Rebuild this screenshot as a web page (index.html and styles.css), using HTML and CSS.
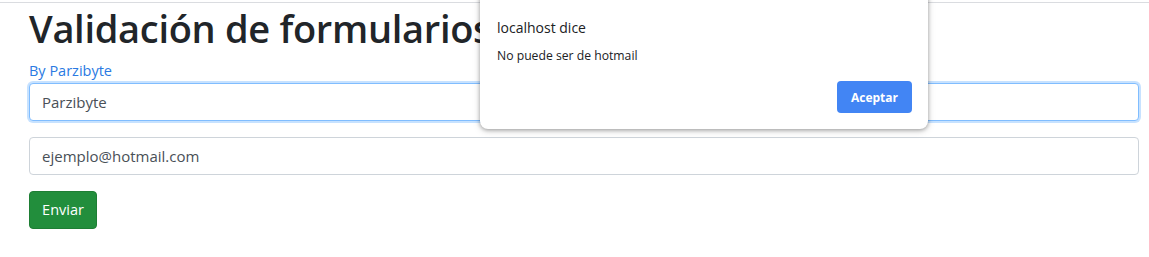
FILE: index.html
```html
<!DOCTYPE html>
<html lang="es">
<head>
    <meta charset="UTF-8">
    <meta name="viewport" content="width=device-width, initial-scale=1.0">
    <title>Validación de formularios</title>
    <link rel="stylesheet" href="styles.css">
</head>
<body>
    <div class="browser-edge"></div>

    <main class="container">
        <h1>Validación de formularios</h1>
        <a class="author" href="#">By Parzibyte</a>

        <form class="form" onsubmit="return false">
            <input class="form-control is-focused" type="text" value="Parzibyte">
            <input class="form-control" type="email" value="ejemplo@hotmail.com">
            <button class="btn-success" type="submit">Enviar</button>
        </form>
    </main>

    <div class="alert-dialog">
        <div class="alert-title">localhost dice</div>
        <div class="alert-message">No puede ser de hotmail</div>
        <div class="alert-actions">
            <button class="btn-accept">Aceptar</button>
        </div>
    </div>
</body>
</html>
```

FILE: styles.css
```css
* {
    margin: 0;
    padding: 0;
    box-sizing: border-box;
}

body {
    font-family: 'Open Sans', 'Noto Sans', sans-serif;
    font-size: 16px;
    line-height: 1.5;
    color: #212529;
    background: #fff;
    position: relative;
    height: 257px;
    overflow: hidden;
}

.browser-edge {
    height: 3px;
    border-bottom: 1px solid #dadce0;
}

.container {
    padding: 0 10px 0 29px;
}

h1 {
    font-size: 38px;
    font-weight: 600;
    line-height: 1.2;
    margin-top: 3px;
    margin-bottom: 9px;
    letter-spacing: -0.3px;
}

.author {
    display: block;
    color: #2a7ae2;
    text-decoration: none;
    font-size: 14.5px;
    line-height: 20px;
    margin-bottom: 2px;
}

.form {
    display: flex;
    flex-direction: column;
    align-items: flex-start;
    gap: 16px;
}

.form-control {
    width: 100%;
    height: 38px;
    padding: 6px 12px;
    font-family: inherit;
    font-size: 15px;
    color: #495057;
    background: #fff;
    border: 1px solid #ced4da;
    border-radius: 4px;
    outline: none;
}

.form-control.is-focused {
    border-color: #80bdff;
    box-shadow: 0 0 0 2px rgba(0, 123, 255, 0.22);
}

.btn-success {
    width: 68px;
    height: 38px;
    font-family: inherit;
    font-size: 14.5px;
    color: #fff;
    background: #228e3c;
    border: 1px solid #1e7e34;
    border-radius: 4px;
    cursor: pointer;
}

.alert-dialog {
    position: absolute;
    left: 480px;
    top: -10px;
    width: 448px;
    height: 139px;
    background: #fff;
    border-radius: 8px;
    box-shadow: 0 1px 4px rgba(0, 0, 0, 0.35), 0 2px 8px rgba(0, 0, 0, 0.12);
    padding: 28px 16px 0 17px;
    font-family: 'Open Sans', 'Noto Sans', sans-serif;
    color: #202124;
}

.alert-title {
    font-size: 14px;
    line-height: 20px;
}

.alert-message {
    font-size: 12.2px;
    line-height: 18px;
    margin-top: 9px;
}

.alert-actions {
    display: flex;
    justify-content: flex-end;
    margin-top: 16px;
}

.btn-accept {
    width: 75px;
    height: 32px;
    font-family: inherit;
    font-size: 12px;
    font-weight: 700;
    color: #fff;
    background: #4285f4;
    border: none;
    border-radius: 4px;
    cursor: pointer;
}
```
